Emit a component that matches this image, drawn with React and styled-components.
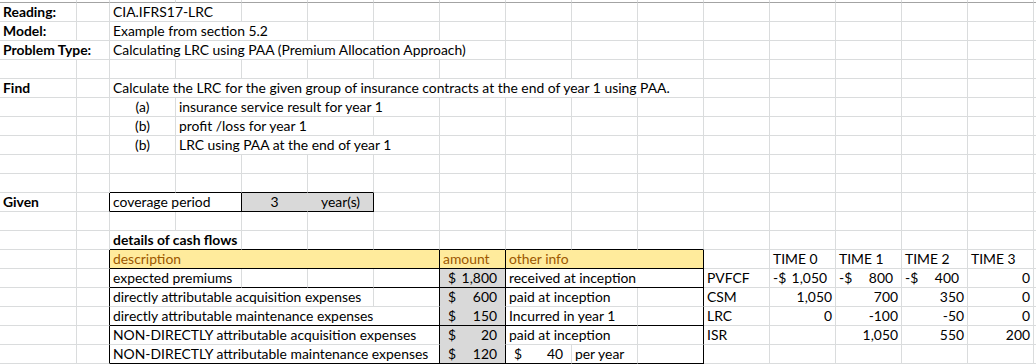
import React from 'react'
import styled, { createGlobalStyle } from 'styled-components'

const GRID = '#dadcdd'
const INK = '#000'
const GREY = '#d9d9d9'
const YELLOW = '#ffeb9c'
const BROWN = '#9c5700'
const COLS = 17

const Global = createGlobalStyle`
  html, body { margin: 0; padding: 0; background: #fff; }
  body { font-family: Lato, "Liberation Sans", sans-serif; }
`

const Sheet = styled.div`
  display: grid;
  grid-template-columns: 77px 33px repeat(14, 66px) 1fr;
  grid-template-rows: 3px;
  grid-auto-rows: 19px;
  width: 1036px;
  height: 364px;
  overflow: hidden;
  font-size: 13.9px;
  color: #000;
`

const Edge = styled.div`
  border-right: 1px solid ${GRID};
  border-bottom: 1px solid #a3a3a3;
`

const Cell = styled.div`
  grid-column: span ${p => p.$span};
  box-sizing: border-box;
  border-right: 1px solid ${p => p.$rb || GRID};
  border-bottom: 1px solid ${p => p.$bb || GRID};
  background: ${p => p.$fill || '#fff'};
  color: ${p => p.$color || 'inherit'};
  font-weight: ${p => (p.$bold ? 700 : 400)};
  text-align: ${p => p.$align || 'left'};
  padding: 0 3px;
  line-height: 18px;
  white-space: nowrap;
  overflow: hidden;
`

const Money = styled(Cell)`
  display: flex;
  justify-content: space-between;
  padding: 0 8px 0 ${p => (p.$neg ? 3 : 8)}px;
`

const Number = styled(Cell)`
  text-align: right;
`

// one spreadsheet row: fills the empty columns and applies the border rules
function buildRow(cells, opts = {}) {
  const byCol = {}
  cells.forEach(x => { byCol[x.col] = x })
  const out = []
  let c = 0
  while (c < COLS) {
    const x = byCol[c] || { col: c }
    const span = x.span || 1
    const last = c + span - 1
    const inBottom = opts.bb && last >= opts.bb[0] && c <= opts.bb[1]
    out.push({
      ...x,
      span,
      rb: x.rb || (opts.rb && opts.rb[last]),
      bb: x.bb || (inBottom ? INK : undefined),
    })
    c += span
  }
  return out
}

const TABLE_RB = { 1: INK, 6: INK, 7: INK, 10: INK }
const head = { fill: YELLOW, color: BROWN }
const amt = (v) => ({ col: 7, kind: 'money', num: v, fill: GREY })

const rows = [
  buildRow([{ col: 0, text: 'Reading:', bold: true }, { col: 2, span: 2, text: 'CIA.IFRS17-LRC' }]),
  buildRow([{ col: 0, text: 'Model:', bold: true }, { col: 2, span: 3, text: 'Example from section 5.2' }]),
  buildRow([
    { col: 0, span: 2, text: 'Problem Type:', bold: true },
    { col: 2, span: 6, text: 'Calculating LRC using PAA (Premium Allocation Approach)' },
  ]),
  buildRow([]),
  buildRow([
    { col: 0, text: 'Find', bold: true },
    { col: 2, span: 9, text: 'Calculate the LRC for the given group of insurance contracts at the end of year 1 using PAA.' },
  ]),
  buildRow([{ col: 2, text: '(a)', align: 'center' }, { col: 3, span: 4, text: 'insurance service result for year 1' }]),
  buildRow([{ col: 2, text: '(b)', align: 'center' }, { col: 3, span: 3, text: 'profit /loss for year 1' }]),
  buildRow([{ col: 2, text: '(b)', align: 'center' }, { col: 3, span: 4, text: 'LRC using PAA at the end of year 1' }]),
  buildRow([]),
  buildRow([], { bb: [2, 5] }),
  buildRow(
    [
      { col: 0, text: 'Given', bold: true },
      { col: 2, span: 2, text: 'coverage period' },
      { col: 4, text: '3', align: 'center', fill: GREY, rb: GREY },
      { col: 5, text: 'year(s)', align: 'center', fill: GREY },
    ],
    { bb: [2, 5], rb: { 1: INK, 3: INK, 5: INK } }
  ),
  buildRow([]),
  buildRow([{ col: 2, span: 2, text: 'details of cash flows', bold: true }], { bb: [2, 10] }),
  buildRow(
    [
      { col: 2, span: 5, text: 'description', ...head },
      { col: 7, text: 'amount', ...head },
      { col: 8, span: 3, text: 'other info', ...head },
      { col: 12, text: 'TIME 0' },
      { col: 13, text: 'TIME 1' },
      { col: 14, text: 'TIME 2' },
      { col: 15, text: 'TIME 3' },
    ],
    { bb: [2, 10], rb: TABLE_RB }
  ),
  buildRow(
    [
      { col: 2, span: 2, text: 'expected premiums' },
      amt('1,800'),
      { col: 8, span: 3, text: 'received at inception' },
      { col: 11, text: 'PVFCF' },
      { col: 12, kind: 'money', neg: true, num: '1,050' },
      { col: 13, kind: 'money', neg: true, num: '800' },
      { col: 14, kind: 'money', neg: true, num: '400' },
      { col: 15, kind: 'num', text: '0' },
    ],
    { bb: [2, 10], rb: TABLE_RB }
  ),
  buildRow(
    [
      { col: 2, span: 4, text: 'directly attributable acquisition expenses' },
      { ...amt('600'), bb: GREY },
      { col: 8, span: 2, text: 'paid at inception' },
      { col: 11, text: 'CSM' },
      { col: 12, kind: 'num', text: '1,050' },
      { col: 13, kind: 'num', text: '700' },
      { col: 14, kind: 'num', text: '350' },
      { col: 15, kind: 'num', text: '0' },
    ],
    { rb: TABLE_RB }
  ),
  buildRow(
    [
      { col: 2, span: 5, text: 'directly attributable maintenance expenses' },
      amt('150'),
      { col: 8, span: 2, text: 'Incurred in year 1' },
      { col: 11, text: 'LRC' },
      { col: 12, kind: 'num', text: '0' },
      { col: 13, kind: 'num', text: '-100' },
      { col: 14, kind: 'num', text: '-50' },
      { col: 15, kind: 'num', text: '0' },
    ],
    { bb: [2, 10], rb: TABLE_RB }
  ),
  buildRow(
    [
      { col: 2, span: 5, text: 'NON-DIRECTLY attributable acquisition expenses' },
      { ...amt('20'), bb: GREY },
      { col: 8, span: 2, text: 'paid at inception' },
      { col: 11, text: 'ISR' },
      { col: 13, kind: 'num', text: '1,050' },
      { col: 14, kind: 'num', text: '550' },
      { col: 15, kind: 'num', text: '200' },
    ],
    { rb: TABLE_RB }
  ),
  buildRow(
    [
      { col: 2, span: 5, text: 'NON-DIRECTLY attributable maintenance expenses' },
      amt('120'),
      { col: 8, kind: 'money', num: '40' },
      { col: 9, text: 'per year' },
    ],
    { bb: [2, 10], rb: TABLE_RB }
  ),
]

function SheetCell({ cell }) {
  const common = {
    $span: cell.span,
    $rb: cell.rb,
    $bb: cell.bb,
    $fill: cell.fill,
    $color: cell.color,
    $bold: cell.bold,
    $align: cell.align,
  }
  if (cell.kind === 'money') {
    return (
      <Money {...common} $neg={cell.neg}>
        <span>{cell.neg ? '-$' : '$'}</span>
        <span>{cell.num}</span>
      </Money>
    )
  }
  if (cell.kind === 'num') return <Number {...common}>{cell.text}</Number>
  return <Cell {...common}>{cell.text}</Cell>
}

export default function App() {
  return (
    <>
      <Global />
      <Sheet>
        {Array.from({ length: COLS }, (_, i) => <Edge key={'e' + i} />)}
        {rows.map((r, ri) =>
          r.map(cell => <SheetCell key={ri + '-' + cell.col} cell={cell} />)
        )}
      </Sheet>
    </>
  )
}
